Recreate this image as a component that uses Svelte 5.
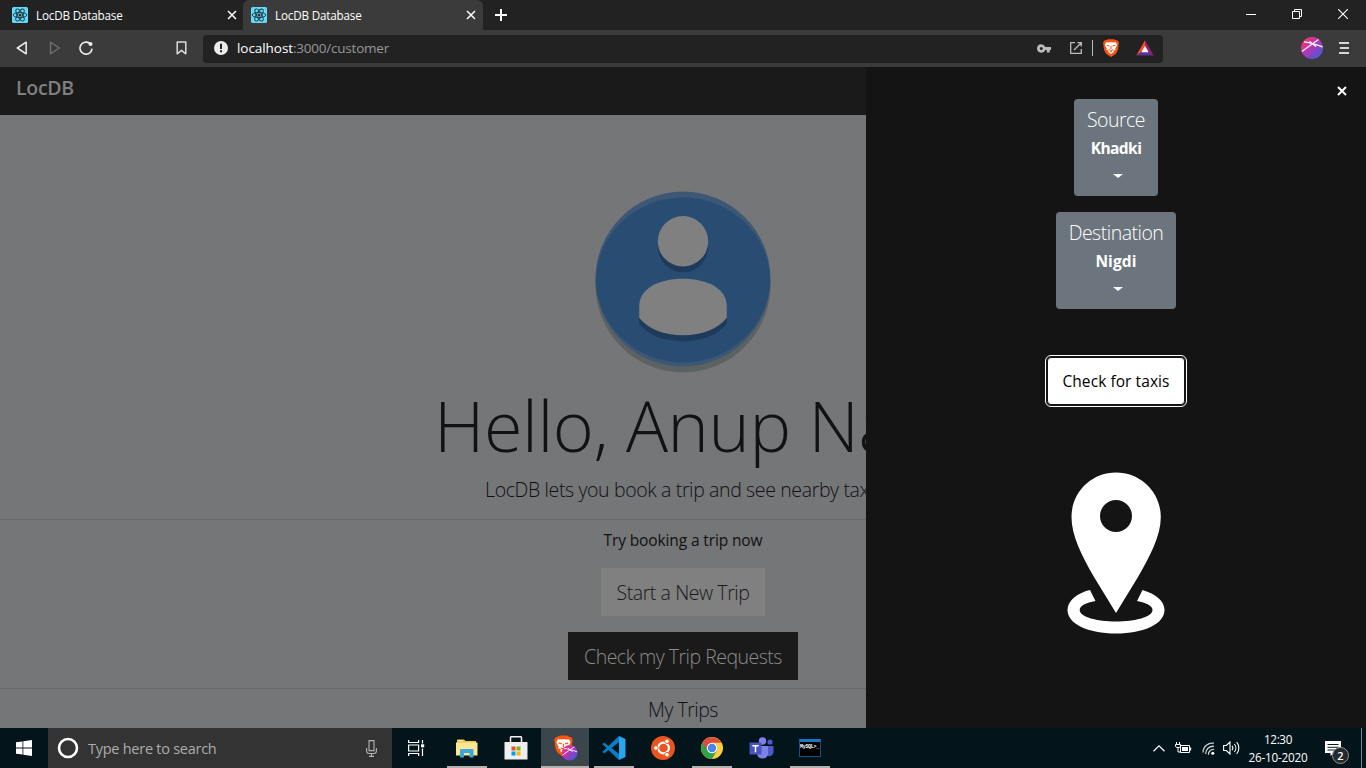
<script>
  const tabs = [
    { title: 'LocDB Database', active: false },
    { title: 'LocDB Database', active: true }
  ];
  const places = [
    { label: 'Source', value: 'Khadki', kind: 'source' },
    { label: 'Destination', value: 'Nigdi', kind: 'destination' }
  ];
</script>

{#snippet cross(size, stroke)}
  <svg width={size} height={size} viewBox="0 0 10 10"><path d="M1 1l8 8M9 1l-8 8" stroke="#fff" stroke-width={stroke} fill="none" /></svg>
{/snippet}

{#snippet lion()}
  <path d="M4 1.2 L6 .2 H12 L14 1.2 L15.8 1.6 L17 4 L16.5 6 C16.5 10 15.5 13 13.5 15 L9 18 L4.500 15 C2.500 13 1.500 10 1.500 6 L1 4 L2.200 1.600Z" fill="#fb5412" />
  <path d="M4.200 3.200 L7 3.600 L9 3.100 L11 3.600 L13.800 3.200 L15.200 6 L13.200 9.600 L13.600 11 L11.400 11.500 L11.700 13.200 L9 15 L6.300 13.200 L6.600 11.500 L4.400 11 L4.800 9.600 L2.800 6Z" fill="#fff" />
  <path d="M4.900 6.300l2.700.8M13.100 6.300l-2.700.8M9 7v3M6.800 10.500l2.200 1 2.200-1M7.700 13.200l1.300-.7 1.300.7" stroke="#fb5412" stroke-width="1" fill="none" />
{/snippet}

{#snippet orb()}
  <circle cx="11" cy="11" r="11" fill="url(#orbfill)" />
  <path d="M3 4.800 C9 5.500 15 7.500 21.600 9.800M1 14.500 C6 10.500 12 6.500 17.500 2.500M8.500 4.500 L15 9.500" stroke="#fff" stroke-width="1.300" fill="none" opacity=".95" />
{/snippet}

<svg class="defs" width="0" height="0">
  <defs>
    <linearGradient id="orbfill" x1=".1" y1=".1" x2=".85" y2=".9">
      <stop offset="0" stop-color="#f5386b" />
      <stop offset=".45" stop-color="#b934b4" />
      <stop offset="1" stop-color="#4a58d8" />
    </linearGradient>
  </defs>
</svg>

<div class="screen">
  <header class="tabstrip">
    {#each tabs as tab}
      <div class="tab" class:active={tab.active}>
        <svg class="favicon" width="16" height="16" viewBox="0 0 16 16">
          <rect width="16" height="16" rx="1.500" fill="#61dafb" />
          <g fill="none" stroke="#24343c" stroke-width=".9">
            <ellipse cx="8" cy="8" rx="6.800" ry="2.600" />
            <ellipse cx="8" cy="8" rx="6.800" ry="2.600" transform="rotate(60 8 8)" />
            <ellipse cx="8" cy="8" rx="6.800" ry="2.600" transform="rotate(120 8 8)" />
          </g>
          <circle cx="8" cy="8" r="1.500" fill="#24343c" />
        </svg>
        <span class="tab-title">{tab.title}</span>
        {@render cross(10, 1.5)}
      </div>
    {/each}
    <div class="newtab">
      <svg width="12" height="12" viewBox="0 0 12 12"><path d="M6 0v12M0 6h12" stroke="#fff" stroke-width="2" /></svg>
    </div>
    <div class="window-buttons">
      <svg width="10" height="10" viewBox="0 0 10 10"><path d="M0 5.500h10" stroke="#fff" /></svg>
      <svg width="10" height="10" viewBox="0 0 10 10"><path d="M.5 2.500h7v7h-7zM2.500 2.500v-2h7v7h-2" stroke="#fff" fill="none" /></svg>
      <svg width="10" height="10" viewBox="0 0 10 10"><path d="M0 0l10 10M10 0L0 10" stroke="#fff" stroke-width="1.100" /></svg>
    </div>
  </header>

  <div class="toolbar">
    <svg class="back" width="12" height="14" viewBox="0 0 12 14"><path d="M10.200 1.200v11.600L1.300 7z" fill="none" stroke="#ededed" stroke-width="1.500" stroke-linejoin="round" /></svg>
    <svg class="forward" width="12" height="14" viewBox="0 0 12 14"><path d="M1.500 1.200v11.600L10.400 7z" fill="none" stroke="#727272" stroke-width="1.300" stroke-linejoin="round" /></svg>
    <svg class="reload" width="14" height="14" viewBox="0 0 14 14"><path d="M10.700 2.400A6 6 0 1 0 13 7.600" fill="none" stroke="#ededed" stroke-width="1.600" /><circle cx="11.500" cy="2.900" r="2" fill="#ededed" /></svg>
    <svg class="bookmark" width="11" height="14" viewBox="0 0 11 14"><path d="M1.200 1h8.600v11.800L5.500 9.300 1.200 12.800z" fill="none" stroke="#dcdcdc" stroke-width="1.500" stroke-linejoin="round" /></svg>
    <div class="address">
      <svg class="info" width="14" height="14" viewBox="0 0 14 14"><circle cx="7" cy="7" r="7" fill="#ececec" /><path d="M7 2.700v5.400M7 9.300v2" stroke="#222" stroke-width="2" /></svg>
      <span class="url"><span class="host">localhost</span><span class="path">:3000/customer</span></span>
      <svg class="key" width="14" height="9" viewBox="0 0 14 9"><path fill-rule="evenodd" d="M4.300.2a4.200 4.200 0 0 1 3.900 2.700H14v3h-1.300v2.500H9.800V5.900H8.200A4.200 4.200 0 1 1 4.300.2zM4.300 3a1.500 1.500 0 1 0 0 3 1.500 1.500 0 0 0 0-3z" fill="#bcbcbc" /></svg>
      <svg class="popout" width="12" height="12" viewBox="0 0 12 12"><path d="M5 .7H.7v10.600h10.600V7M7.500.7h3.800v3.800M11.300.7L4 8" fill="none" stroke="#bcbcbc" stroke-width="1.300" /></svg>
      <i class="divider"></i>
      <svg class="shield" width="18" height="19" viewBox="0 0 18 19">{@render lion()}</svg>
      <svg class="bat" width="18" height="16" viewBox="0 0 18 16"><path d="M9 .3L.3 15.500 9 10z" fill="#ff4a27" /><path d="M9 .3l8.700 15.200L9 10z" fill="#9c1e62" /><path d="M.3 15.500h17.400L9 9z" fill="#5f3198" /><path d="M9 5.700l3.600 6.500H5.400z" fill="#fff" /></svg>
    </div>
    <svg class="profile" width="22" height="22" viewBox="0 0 22 22">{@render orb()}</svg>
    <svg class="menu" width="10" height="12" viewBox="0 0 10 12"><path d="M0 1h10M1 6h9M0 11h10" stroke="#d8d8d8" stroke-width="2" /></svg>
  </div>

  <div class="page">
    <main>
      <nav><span class="brand">LocDB</span></nav>
      <section class="hero">
        <svg class="avatar" width="178" height="184" viewBox="0 0 178 184">
          <circle cx="89" cy="94" r="87.500" fill="#5c6161" />
          <circle cx="89" cy="88" r="87.500" fill="#3d5774" />
          <path d="M1.700 91A87.300 84.500 0 0 1 176.300 91A87.400 84.500 0 0 1 1.700 91z" fill="#294c73" />
          <circle cx="89" cy="56.300" r="25" fill="#1f3b5b" />
          <circle cx="89" cy="50.300" r="25.200" fill="#808080" />
          <path d="M45.200 121C45.200 104 64 93.700 89 93.700S132.800 104 132.800 121V132.700C124 144 108 150.200 89 150.200S54 144 45.200 132.700z" fill="#1f3b5b" />
          <path d="M45.200 115C45.200 98 64 87.700 89 87.700S132.800 98 132.800 115V126.700C124 138 108 144.200 89 144.200S54 138 45.200 126.700z" fill="#808080" />
        </svg>
        <h1>Hello, Anup Na</h1>
        <p class="lead">LocDB lets you book a trip and see nearby taxis</p>
      </section>
      <section class="booking">
        <p class="try">Try booking a trip now</p>
        <button class="big start">Start a New Trip</button>
        <button class="big requests">Check my Trip Requests</button>
      </section>
      <section class="trips">
        <p class="my">My Trips</p>
      </section>
    </main>

    <aside>
      <div class="close">{@render cross(10, 2)}</div>
      {#each places as place}
        <button class="place {place.kind}">
          <span class="label">{place.label}</span>
          <b>{place.value}</b>
          <i class="caret"></i>
        </button>
      {/each}
      <button class="check">Check for taxis</button>
      <svg class="pin" width="98" height="162" viewBox="0 0 98 162">
        <path fill-rule="evenodd" fill="#fff" d="M49 .5C73.600.5 93.800 20 93.800 45C93.800 64 83 84 71 105L49 141L27 105C15 84 4.500 64 4.500 45C4.500 20 24.500.5 49 .5zM49 28a16 16 0 1 0 0 32 16 16 0 0 0 0-32z" />
        <path fill="#fff" d="M23 118L28.500 129C19 130.500 12.700 134 12.700 138C12.700 145 30 149.500 49 149.500S85.500 145 85.500 138C85.500 134 79 130.500 70 129L75.500 118C89 122 97.500 129 97.500 138C97.500 152 77 161.500 49 161.500S.5 152 .5 138C.5 129 10 121 23 118z" />
      </svg>
    </aside>
  </div>

  <footer>
    <div class="slot">
      <svg width="16" height="16" viewBox="0 0 16 16"><path d="M0 2.300l6.500-.9v6.200H0zM7.300 1.300L16 0v7.600H7.300zM0 8.400h6.500v6.200L0 13.700zM7.300 8.400H16V16l-8.700-1.200z" fill="#fff" /></svg>
    </div>
    <div class="search">
      <svg width="22" height="22" viewBox="0 0 22 22"><circle cx="11" cy="11" r="9" fill="none" stroke="#fff" stroke-width="2.600" /></svg>
      <span>Type here to search</span>
      <svg width="11" height="17" viewBox="0 0 11 17"><path d="M3 .6h5v10H3zM.6 8v3q0 2.500 2.500 2.500h4.800q2.500 0 2.500-2.500V8M5.500 13.500v3M3 16.400h5" fill="none" stroke="#b4b4b4" stroke-width="1.100" /></svg>
    </div>
    <div class="slot">
      <svg width="17" height="16" viewBox="0 0 17 16"><path d="M.6 0v2.500h10V0M.6 16v-2.500h10V16M.6 5h10v6H.6zM14.500 0v3.500M14.500 8.500V16" fill="none" stroke="#fff" stroke-width="1.200" /><path d="M13 4.300h3.200v3H13z" fill="#fff" /></svg>
    </div>

    <div class="apps">
      <div class="app open">
        <svg width="22" height="19" viewBox="0 0 22 19"><path d="M1 .5h7l1.500 1.500H20V5H1z" fill="#f0c84f" /><path d="M2.500 1h4v1h-4z" fill="#fff3c0" /><path d="M0 3.500h21.500V16.500H0z" fill="#ffe594" /><path d="M4 18.500V11q0-1 1-1h11.500q1 0 1 1v7.500h-4V14H8v4.500z" fill="#39a7dc" /></svg>
      </div>
      <div class="app">
        <svg width="24" height="24" viewBox="0 0 24 24"><path d="M6.500 7V1.700q0-1 1-1h9q1 0 1 1V7" fill="none" stroke="#f4f4f4" stroke-width="1.500" /><path d="M.5 6h23v17.500H.5z" fill="#efefef" /><path d="M7.500 10.500h4v4h-4z" fill="#f04f24" /><path d="M12.500 10.500h4v4h-4z" fill="#7db900" /><path d="M7.500 15.500h4v4h-4z" fill="#00a3ee" /><path d="M12.500 15.500h4v4h-4z" fill="#ffb800" /></svg>
      </div>
      <div class="app open current">
        <svg width="25" height="26" viewBox="0 0 25 26"><g transform="translate(0 .3) scale(1.160 1.200)">{@render lion()}</g><g transform="translate(9 10) scale(.7)">{@render orb()}</g></svg>
      </div>
      <div class="app open">
        <svg width="24" height="24" viewBox="0 0 24 24"><path d="M17 0L6.500 10 2.500 6.800.3 8 4.600 12 .3 16l2.200 1.200L6.500 14 17 24V18L9.500 12 17 6z" fill="#087fc8" /><path d="M17 0l6.500 3v18L17 24z" fill="#2ba4ee" /></svg>
      </div>
      <div class="app">
        <svg width="24" height="24" viewBox="0 0 24 24"><circle cx="12" cy="12" r="12" fill="#e95420" /><circle cx="12.500" cy="12" r="5.400" fill="none" stroke="#fff" stroke-width="2.200" /><g fill="#fff" stroke="#e95420" stroke-width=".9"><circle cx="4.900" cy="12" r="2.300" /><circle cx="16" cy="5.300" r="2.300" /><circle cx="16" cy="18.700" r="2.300" /></g></svg>
      </div>
      <div class="app open">
        <svg width="22" height="22" viewBox="0 0 22 22"><circle cx="11" cy="11" r="11" fill="#fccf3e" /><path d="M11 11L1.500 5.500A11 11 0 0 0 11 22l4.800-8.300z" fill="#2fa24c" /><path d="M1.500 5.500A11 11 0 0 1 20.500 5.700H11L6.300 13.600z" fill="#dd4b3e" /><circle cx="11" cy="11" r="5.200" fill="#fff" /><circle cx="11" cy="11" r="4.200" fill="#4586ef" /></svg>
      </div>
      <div class="app">
        <svg width="25" height="23" viewBox="0 0 25 23"><circle cx="21" cy="5" r="2.600" fill="#5059c9" /><path d="M16 9h8.500v6.500a4.500 4.500 0 0 1-8 2z" fill="#5059c9" /><circle cx="13.500" cy="4" r="3.700" fill="#7b83eb" /><path d="M8 9h11v8a5.600 5.600 0 0 1-11 0z" fill="#7b83eb" /><path d="M.5 5.500h12v12H.5z" fill="#4a53bc" /><path d="M3.300 8.700h6.400M6.500 8.700v6.600" stroke="#fff" stroke-width="1.500" /></svg>
      </div>
      <div class="app open">
        <div class="console"><span>MySQL&gt;_</span></div>
      </div>
    </div>

    <div class="tray">
      <svg class="up" width="12" height="7" viewBox="0 0 12 7"><path d="M.5 6.300L6 .9l5.500 5.400" fill="none" stroke="#fff" stroke-width="1.200" /></svg>
      <svg class="battery" width="17" height="12" viewBox="0 0 17 12"><path d="M5.500 3.500h9v7h-9z" fill="none" stroke="#fff" /><path d="M7 5h6v4H7zM15 5.500h1.200v3H15z" fill="#fff" /><path d="M1.500 0v2.500M4.500 0v2.500M.5 2.500h5v2l-1.500 1h-2l-1.500-1zM3 5.500v4.500h2.500" fill="none" stroke="#fff" /></svg>
      <svg class="wifi" width="13" height="13" viewBox="0 0 13 13"><path d="M1 10.500A9.500 9.500 0 0 1 12 1.200M3.600 12A7.500 7.500 0 0 1 12 4.300M6.500 12.800A5 5 0 0 1 12 7.400" fill="none" stroke="#c9cfd1" stroke-width="1.300" /><circle cx="10.800" cy="11.300" r="1.500" fill="#fff" /></svg>
      <svg class="volume" width="17" height="14" viewBox="0 0 17 14"><path d="M.6 4.500h2.700L7 1v12L3.300 9.500H.6zM9 4.800a3.500 3.500 0 0 1 0 4.400M11.300 3a6 6 0 0 1 0 8M13.700 1.200a9 9 0 0 1 0 11.600" fill="none" stroke="#fff" stroke-width="1.100" /></svg>
      <div class="clock"><span class="time">12:30</span><span class="date">26-10-2020</span></div>
      <div class="notify">
        <svg width="16" height="15" viewBox="0 0 16 15"><path d="M0 0h16v12h-7.500l-3 3v-3H0z" fill="#fff" /><path d="M2.500 3.500h11M2.500 6.300h11M2.500 9h8" stroke="#061920" /></svg>
        <span class="badge">2</span>
      </div>
      <i class="desktop"></i>
    </div>
  </footer>
</div>

<style>
  :global(body) { margin: 0; overflow: hidden; background: #141414; }
  .defs { position: absolute; }
  .screen { width: 1366px; height: 768px; display: flex; flex-direction: column; overflow: hidden; font-family: "Open Sans", "Noto Sans", sans-serif; }
  svg { display: block; flex: none; }
  p, h1 { margin: 0; white-space: nowrap; }
  button { border: 0; padding: 0; font-family: inherit; white-space: nowrap; }

  .tabstrip { height: 30px; flex: none; display: flex; background: #222; }
  .tab { width: 240px; padding: 0 7px 0 8px; box-sizing: border-box; display: flex; align-items: center; color: #fff; border-radius: 6px 6px 0 0; }
  .tab:first-child { width: 243px; padding: 0 6px 0 12px; }
  .tab.active { background: #3b3b3b; }
  .tab-title { flex: 1; margin-left: 8px; font-size: 11.7px; line-height: 29px; letter-spacing: -.19px; }
  .newtab { width: 36px; display: flex; align-items: center; justify-content: center; }
  .window-buttons { margin-left: auto; display: flex; align-items: center; gap: 36px; padding: 0 18px 2px 0; }

  .toolbar { height: 37px; flex: none; display: flex; align-items: center; background: #3b3b3b; box-sizing: border-box; }
  .toolbar > svg { margin-top: -1px; }
  .toolbar .back { margin-left: 16px; }
  .toolbar .forward { margin-left: 21px; }
  .toolbar .reload { margin-left: 18px; }
  .toolbar .bookmark { margin-left: 83px; }
  .address { margin-left: 16px; width: 960px; height: 28px; background: #222; border-radius: 4px; display: flex; align-items: center; padding: 0 9px 1px 11px; box-sizing: border-box; }
  .url { margin-left: 9px; font-size: 13.5px; line-height: 27px; flex: 1; }
  .host { color: #fff; letter-spacing: -.06px; }
  .path { color: #979797; letter-spacing: -.22px; }
  .popout { margin-left: 19px; }
  .divider { width: 1px; height: 16px; background: #bcbcbc; margin-left: 10px; }
  .shield { margin-left: 9px; }
  .bat { margin-left: 16px; }
  .toolbar .profile { margin-left: 138px; }
  .toolbar .menu { margin-left: 16px; }

  .page { height: 661px; display: flex; flex: none; }
  main { width: 866px; background: #757678; overflow: hidden; color: #0f1012; }
  nav { height: 48px; background: #1a1a1a; padding-left: 16px; box-sizing: border-box; }
  .brand { display: block; font-size: 19.5px; font-weight: 600; line-height: 42px; letter-spacing: -.3px; color: #808080; }
  .hero { height: 405px; padding-top: 76px; box-sizing: border-box; border-bottom: 1px solid #68696b; }
  .avatar { margin-left: 594px; }
  h1 { margin: 7px 0 0 434px; font-size: 70px; font-weight: 300; line-height: 86px; letter-spacing: -.4px; color: #111214; }
  .lead { margin: 6px 0 0 485px; font-size: 19.500px; font-weight: 300; line-height: 32px; letter-spacing: -.37px; }
  .booking { width: 1366px; height: 169px; box-sizing: border-box; border-bottom: 1px solid #68696b; padding-top: 8px; display: flex; flex-direction: column; align-items: center; }
  .try { font-size: 15.5px; line-height: 24px; letter-spacing: -.12px; color: #111; }
  .big { height: 48px; margin-top: 16px; padding-top: 2px; font-size: 19.5px; font-weight: 300; line-height: 46px; flex: none; }
  .start { width: 164px; background: #808080; color: #191919; letter-spacing: -.43px; }
  .requests { width: 230px; background: #1a1a1a; color: #8b8b8b; letter-spacing: -.51px; }
  .trips { width: 1366px; padding-top: 6px; text-align: center; }
  .my { font-size: 19.5px; font-weight: 300; line-height: 30px; letter-spacing: -.5px; }

  aside { position: relative; width: 500px; height: 661px; background: #141414; padding-top: 32px; box-sizing: border-box; display: flex; flex-direction: column; align-items: center; }
  .close { position: absolute; top: 19px; right: 19px; }
  .place { height: 97px; padding-top: 6px; margin-bottom: 16px; box-sizing: border-box; background: #6c757d; border-radius: 4px; color: #fff; display: flex; flex-direction: column; align-items: center; flex: none; }
  .source { width: 84px; }
  .destination { width: 120px; }
  .label { font-size: 19.5px; font-weight: 300; line-height: 30px; letter-spacing: -.5px; }
  .place b { font-size: 15.5px; line-height: 24px; margin-top: 1px; }
  .source b { letter-spacing: -.55px; }
  .destination b { letter-spacing: .1px; }
  .caret { margin: 14px 0 0 4px; border: 5px solid transparent; border-top: 4px solid #fff; border-bottom: 0; }
  .check { box-sizing: content-box; width: 136px; height: 46px; margin-top: 32px; background: #fff; border: 1px solid #141414; border-radius: 4px; outline: 1.5px solid #fff; outline-offset: 1px; font-size: 15.5px; font-weight: 500; color: #000; letter-spacing: .07px; flex: none; }
  .pin { margin-top: 67px; }

  footer { height: 40px; flex: none; display: flex; background: #03151b; }
  .slot { width: 48px; display: flex; align-items: center; justify-content: center; }
  .search { width: 344px; background: #333; display: flex; align-items: center; padding: 0 15px 0 9px; box-sizing: border-box; color: #adadad; }
  .search span { flex: 1; margin-left: 9px; padding-top: 1px; font-size: 14.5px; line-height: 40px; letter-spacing: -.26px; }
  .apps { display: flex; gap: 1px; margin-left: 3px; }
  .app { width: 48px; height: 40px; display: flex; align-items: center; justify-content: center; }
  .app.open { background: linear-gradient(#b5b1ae, #b5b1ae) center bottom / 40px 2px no-repeat; }
  .app.current { background: linear-gradient(#b5b1ae, #b5b1ae) center bottom / 48px 2px no-repeat #3a464b; }
  .console { width: 22px; height: 18px; box-sizing: border-box; background: #000; border: 1px solid #1b4d86; border-top: 3px solid #1b76c8; color: #fff; overflow: hidden; }
  .console span { display: block; font: 700 5px/11px "Liberation Mono", monospace; letter-spacing: -.3px; }
  .tray { margin-left: auto; display: flex; align-items: center; }
  .battery { margin-left: 10px; }
  .wifi { margin-left: 10px; }
  .volume { margin-left: 8px; }
  .clock { margin-left: 8px; width: 60px; padding-bottom: 1px; display: flex; flex-direction: column; align-items: center; color: #fff; font-size: 11.7px; line-height: 18px; }
  .time { letter-spacing: -.36px; }
  .date { letter-spacing: -.2px; }
  .notify { position: relative; margin-left: 17px; width: 24px; height: 15px; }
  .badge { position: absolute; left: 7px; top: 6px; width: 15px; height: 15px; border: 1px solid #8d9294; border-radius: 50%; background: #26292b; color: #fff; font-size: 11px; font-weight: 600; line-height: 15px; text-align: center; }
  .desktop { width: 1px; height: 40px; background: #78868b; margin: 0 4px 0 12px; }
</style>
